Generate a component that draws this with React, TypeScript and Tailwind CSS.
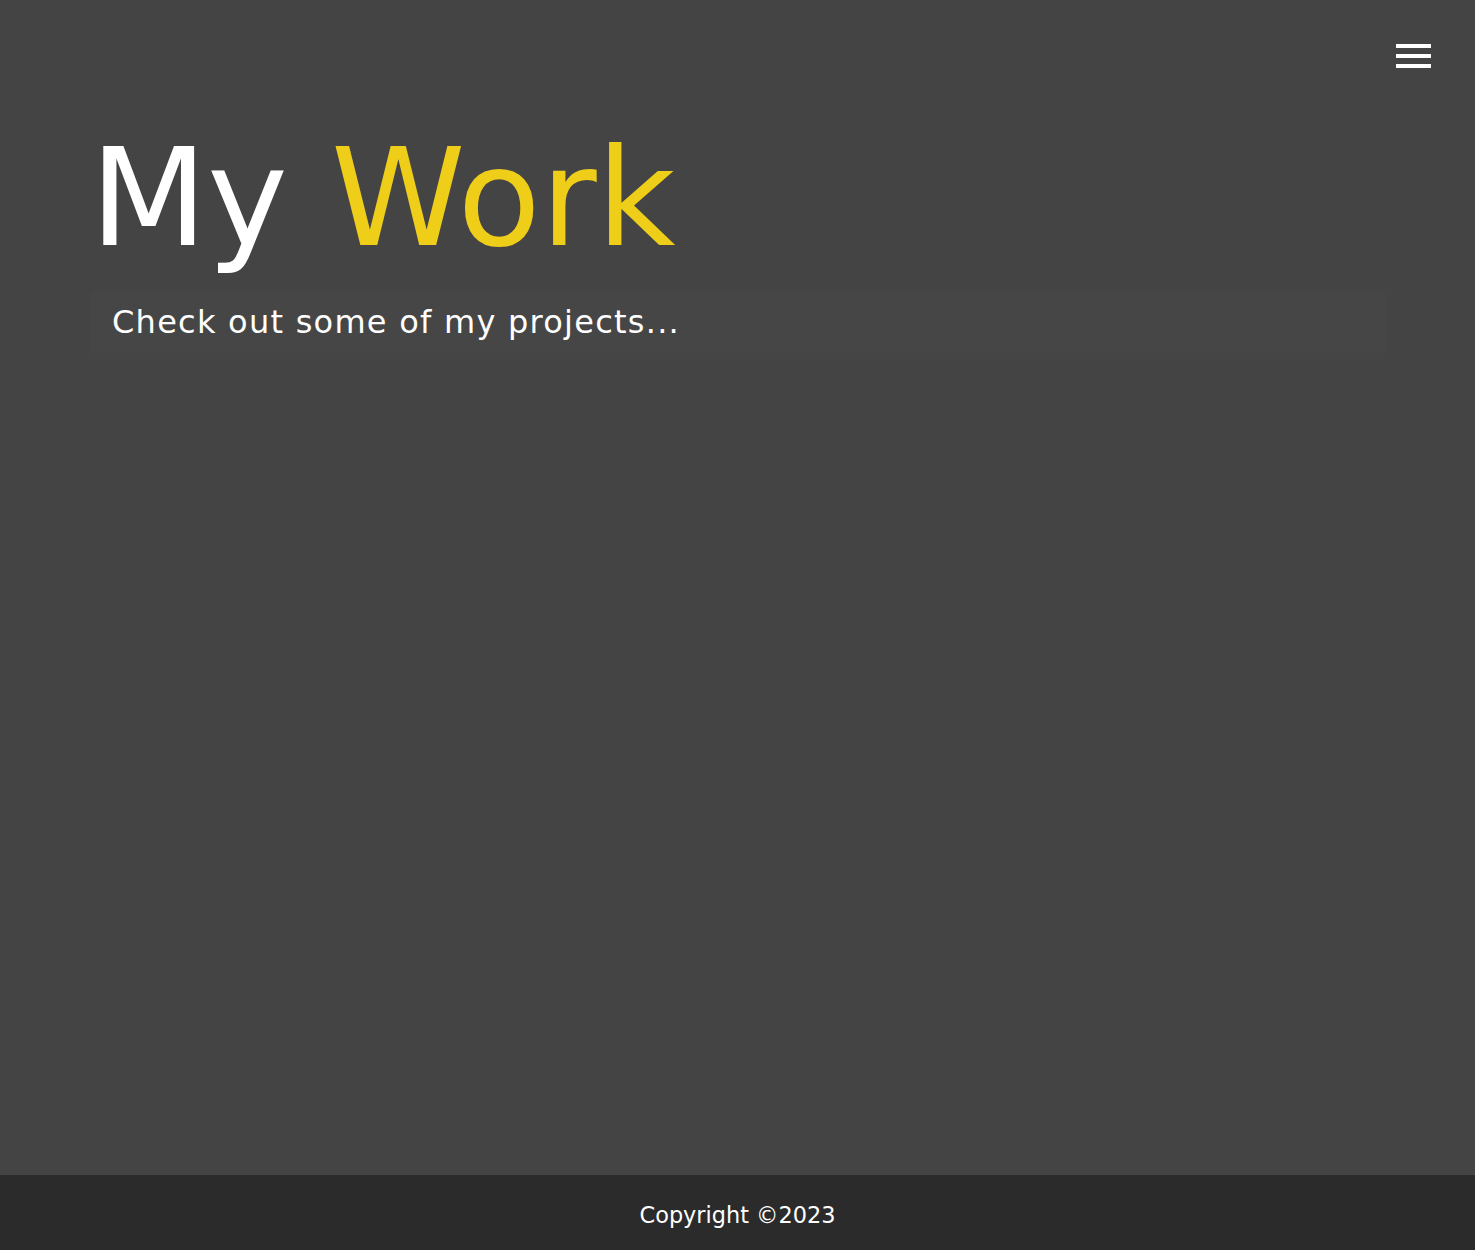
export default function App() {
  return (
    <div className="min-h-screen flex flex-col bg-[#444444] text-white" style={{ fontFamily: '"DejaVu Sans", sans-serif' }}>
      <header className="flex justify-end pt-[44px] pr-[44px]">
        <button className="flex flex-col gap-[6px]" aria-label="menu">
          <span className="block w-[35px] h-[4px] bg-white" />
          <span className="block w-[35px] h-[4px] bg-white" />
          <span className="block w-[35px] h-[4px] bg-white" />
        </button>
      </header>
      <main className="flex-1 px-[90px] pt-[51px]">
        <h1 className="text-[136px] leading-[158px] font-normal">
          My <span className="text-[#efce1a]">Work</span>
        </h1>
        <div className="mt-[15px] bg-[#464646] px-[22px] py-[12px]">
          <p className="text-[32px] leading-[37px] tracking-[1.25px]">Check out some of my projects...</p>
        </div>
      </main>
      <footer className="h-[75px] bg-[#2b2b2b] pt-[27px] text-center">
        <p className="text-[22.4px] leading-[26px]">Copyright ©2023</p>
      </footer>
    </div>
  );
}
